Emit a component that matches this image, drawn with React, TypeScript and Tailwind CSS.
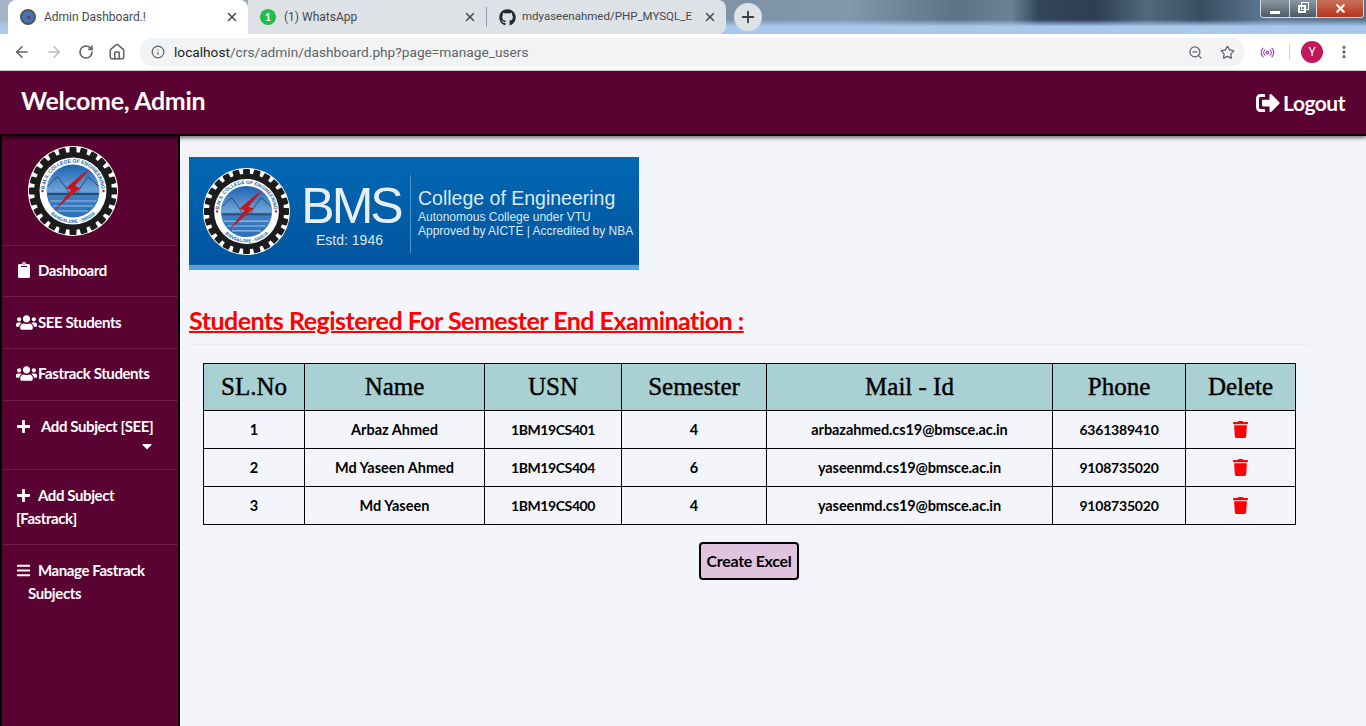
import { ArrowLeft, ArrowRight, Home, Info, MoreVertical, Plus, Radio, RotateCw, Star, X, ZoomOut } from "lucide-react";
import type { ReactNode } from "react";
import { FaBars, FaCaretDown, FaClipboard, FaGithub, FaPlus, FaSignOutAlt, FaTrash, FaUsers } from "react-icons/fa";

const students = [
    { sl: 1, name: "Arbaz Ahmed", usn: "1BM19CS401", sem: 4, mail: "arbazahmed.cs19@bmsce.ac.in", phone: "6361389410" },
    { sl: 2, name: "Md Yaseen Ahmed", usn: "1BM19CS404", sem: 6, mail: "yaseenmd.cs19@bmsce.ac.in", phone: "9108735020" },
    { sl: 3, name: "Md Yaseen", usn: "1BM19CS400", sem: 4, mail: "yaseenmd.cs19@bmsce.ac.in", phone: "9108735020" },
];

const headers = ["SL.No", "Name", "USN", "Semester", "Mail - Id", "Phone", "Delete"];

function CollegeLogo({ size }: { size: number }) {
    const teeth = Array.from({ length: 24 }, (_, i) => i * 15);
    return (
        <svg width={size} height={size} viewBox="0 0 90 90">
            <defs>
                <path id="logo-top-arc" d="M16.5 45a28.5 28.5 0 0 1 57 0" />
                <path id="logo-bottom-arc" d="M13 45a32 32 0 0 0 64 0" />
                <linearGradient id="logo-sky" x1="0" y1="0" x2="0" y2="1">
                    <stop offset="0" stopColor="#1b62b4" />
                    <stop offset="0.5" stopColor="#6fa4d8" />
                    <stop offset="0.55" stopColor="#3f7fc4" />
                    <stop offset="1" stopColor="#2d6fb8" />
                </linearGradient>
            </defs>
            <circle cx="45" cy="45" r="45" fill="#fff" />
            {teeth.map(a => (
                <rect key={a} x="41.5" y="1" width="7" height="9" rx="1" fill="#1c1c1c" transform={`rotate(${a} 45 45)`} />
            ))}
            <circle cx="45" cy="45" r="39" fill="#1c1c1c" />
            <circle cx="45" cy="45" r="33.5" fill="#fff" />
            <circle cx="45" cy="45" r="26.5" fill="url(#logo-sky)" />
            <path d="M19.5 47h51v2h-51z" fill="#274a70" />
            <path d="M20 40q7-8 10-9 5 6 11 16M49 47q6-10 11-16 4 2 10 9" fill="none" stroke="#1f4468" strokeWidth="0.9" />
            <path d="M22 55h46M25 60h40M30 65h30" stroke="#9cc2e6" strokeWidth="1.2" />
            <path d="M62 23 47 40l5 2-25 22 16-20-5-2 15-13z" fill="#c4161c" />
            <circle cx="14.5" cy="45" r="1.2" fill="#c4161c" />
            <circle cx="75.5" cy="45" r="1.2" fill="#c4161c" />
            <text fontSize="5" fontWeight="700" fill="#1f5fa8" fontFamily="Liberation Sans, sans-serif">
                <textPath href="#logo-top-arc" startOffset="50%" textAnchor="middle">B.M.S. COLLEGE OF ENGINEERING</textPath>
            </text>
            <text fontSize="4.6" fontWeight="700" fill="#1f5fa8" fontFamily="Liberation Sans, sans-serif">
                <textPath href="#logo-bottom-arc" startOffset="50%" textAnchor="middle">BANGALORE - 560019</textPath>
            </text>
        </svg>
    );
}

function Tab({ active, icon, title, width, className, titleClass }: { active?: boolean; icon: ReactNode; title: string; width: string; className?: string; titleClass?: string }) {
    return (
        <div className={`${width} h-[34px] shrink-0 flex items-center pl-3 pr-[9px] gap-2 ${active ? "bg-white rounded-t-lg" : "bg-[#dee1e6]"} ${className ?? ""}`}>
            {icon}
            <span className={`flex-1 min-w-0 whitespace-nowrap text-[#45494d] font-['Roboto',sans-serif] ${titleClass ?? "text-[12px]"}`}>{title}</span>
            <X size={14} strokeWidth={2.5} className="text-[#45494d] shrink-0" />
        </div>
    );
}

function SideItem({ icon, children, className }: { icon: ReactNode; children: ReactNode; className?: string }) {
    return (
        <div className={`border-t border-[#6d1c48] pl-[14px] pr-2 text-[15px] tracking-[-0.4px] font-bold leading-[23px] text-white ${className ?? ""}`}>
            <span className="inline-flex w-[22px] align-[-2px]">{icon}</span>
            {children}
        </div>
    );
}

function App() {
    return (
        <div className="h-[726px] flex flex-col overflow-hidden bg-[#f4f5fa] font-['Lato',sans-serif]">
            {/* browser tab strip */}
            <div className="relative h-[34px] shrink-0 flex bg-[linear-gradient(180deg,transparent_58%,#a9c9ec_78%),linear-gradient(90deg,#a5b5c4_0%,#7f93a6_55%,#8398ab_62%,#5d7287_70%,#6d8297_74%,#33475a_76%,#2c3e50_80%,#52687d_84%,#3a4e62_88%,#5f7b96_93%,#567390_100%)]">
                <div className="w-2 shrink-0"></div>
                <Tab
                    active
                    width="w-[240px]"
                    title="Admin Dashboard.!"
                    icon={
                        <span className="w-4 h-4 rounded-full bg-[#3b76bd] border-2 border-[#555] shrink-0 flex items-center justify-center">
                            <span className="w-[3px] h-[3px] bg-[#c4161c] rounded-full"></span>
                        </span>
                    }
                />
                <Tab
                    width="w-[238px]"
                    title="(1) WhatsApp"
                    icon={<span className="w-4 h-4 rounded-full bg-[#1ebe4e] text-white text-[11px] font-bold leading-4 text-center shrink-0">1</span>}
                />
                <div className="w-px h-[34px] shrink-0 bg-[#dee1e6] flex items-center"><div className="w-px h-5 bg-[#9aa0a6]"></div></div>
                <Tab
                    width="w-[239px]"
                    className="rounded-tr-lg rounded-br-lg"
                    titleClass="text-[11.5px]"
                    title="mdyaseenahmed/PHP_MYSQL_E"
                    icon={<FaGithub size={17} className="text-[#24292e] shrink-0 -mr-0.5" />}
                />
                <div className="ml-2 mt-[3px] w-7 h-7 shrink-0 rounded-full bg-[#dee1e6] flex items-center justify-center">
                    <Plus size={18} strokeWidth={2.5} className="text-[#3c4043]" />
                </div>
                {/* window buttons */}
                <div className="absolute right-[2px] top-0 h-[18px] flex border border-t-0 border-[#d5dbe2] rounded-b-[4px] overflow-hidden">
                    <div className="w-7 flex items-end justify-center pb-[3px] bg-[linear-gradient(180deg,#8a97a3,#4c5a68)]"><div className="w-[10px] h-[3px] bg-white"></div></div>
                    <div className="w-7 relative flex items-center justify-center border-x border-[#d5dbe2] bg-[linear-gradient(180deg,#8a97a3,#4c5a68)]">
                        <div className="absolute left-[11px] top-[2px] w-[8px] h-[8px] border border-white"></div>
                        <div className="absolute left-[8px] top-[5px] w-[8px] h-[8px] border-2 border-white"></div>
                    </div>
                    <div className="w-[46px] flex items-center justify-center bg-[linear-gradient(180deg,#c9705a,#b8341c)]"><X size={13} strokeWidth={4} className="text-white" /></div>
                </div>
            </div>

            {/* browser toolbar */}
            <div className="h-[37px] shrink-0 flex items-center bg-white border-b border-[#d3d5d8] pl-[13px] font-['Roboto',sans-serif]">
                <ArrowLeft size={18} className="text-[#5f6368]" />
                <ArrowRight size={18} className="text-[#babcbe] ml-[14px]" />
                <RotateCw size={16} strokeWidth={2.4} className="text-[#5f6368] ml-[15px]" />
                <Home size={18} className="text-[#5f6368] ml-[14px]" />
                <div className="ml-[14px] w-[1105px] h-7 rounded-full bg-[#f1f3f4] flex items-center pl-[11px] pr-[9px]">
                    <Info size={14} className="text-[#5f6368]" />
                    <span className="ml-[9px] flex-1 text-[13.7px] text-[#5f6368]"><span className="text-[#202124]">localhost</span>/crs/admin/dashboard.php?page=manage_users</span>
                    <ZoomOut size={15} className="text-[#5f6368]" />
                    <Star size={15} className="text-[#5f6368] ml-[17px] mr-[1px]" />
                </div>
                <Radio size={15} className="ml-[15px] text-[#a545c9]" />
                <div className="ml-[14px] w-px h-4 bg-[#d0d2d5]"></div>
                <div className="ml-[11px] w-[22px] h-[22px] rounded-full bg-[#c2185b] text-white text-[12px] flex items-center justify-center">Y</div>
                <MoreVertical size={16} strokeWidth={3} className="text-[#5f6368] ml-[13px]" />
            </div>

            {/* app header */}
            <header className="relative z-10 h-[65px] shrink-0 flex items-center justify-between px-[21px] bg-[#5a0231] border-b-2 border-black shadow-[0_2px_4px_rgba(0,0,0,0.55)] text-white font-bold">
                <p className="text-[25px] tracking-[-0.3px] mt-[-4px]">Welcome, Admin</p>
                <p className="flex items-center gap-[3px] text-[21px] tracking-[-0.5px]"><FaSignOutAlt size={24} />Logout</p>
            </header>

            <div className="flex-1 flex min-h-0">
                {/* sidebar */}
                <aside className="w-[180px] shrink-0 bg-[#5a0231] border-x-2 border-black">
                    <div className="h-[109px] pl-[26px] pt-[10px]"><CollegeLogo size={90} /></div>
                    <SideItem className="h-[51px] pt-[13px]" icon={<FaClipboard size={16} />}>Dashboard</SideItem>
                    <SideItem className="h-[52px] pt-[12px]" icon={<FaUsers size={21} className="translate-y-[3px]" />}>SEE Students</SideItem>
                    <SideItem className="h-[52px] pt-[11px]" icon={<FaUsers size={21} className="translate-y-[3px]" />}>Fastrack Students</SideItem>
                    <div className="h-[69px] border-t border-[#6d1c48] pl-[14px] pr-2 pt-[14px] text-[15px] tracking-[-0.4px] font-bold leading-[23px] text-white">
                        <span className="inline-flex w-[25px] align-[-2px]"><FaPlus size={15} /></span>Add Subject [SEE]
                        <div className="flex justify-end pr-[15px]"><FaCaretDown size={16} /></div>
                    </div>
                    <SideItem className="h-[75px] pt-[14px]" icon={<FaPlus size={15} />}>Add Subject [Fastrack]</SideItem>
                    <div className="h-[70px] border-t border-[#6d1c48] pl-[14px] pt-[14px] text-[15px] tracking-[-0.4px] font-bold leading-[23px] text-white">
                        <span className="inline-flex w-[22px] align-[-2px]"><FaBars size={15} /></span>Manage Fastrack
                        <p className="pl-3">Subjects</p>
                    </div>
                </aside>

                {/* main content */}
                <main className="flex-1 min-w-0 pl-[9px] pt-[21px]">
                    <div className="w-[450px] h-[113px] flex bg-[linear-gradient(180deg,#0268b3_0%,#01559f_95%,#5a9fd4_96%)] text-[#dce8f2] font-['Liberation_Sans',sans-serif]">
                        <div className="ml-[14px] mt-[11px] shrink-0"><CollegeLogo size={87} /></div>
                        <div className="ml-[12px] w-[98px] mt-[24px] flex flex-col items-center shrink-0">
                            <p className="text-[50px] leading-[50px] tracking-[-3px] text-[#e8eef3]">BMS</p>
                            <p className="text-[14px] leading-[16px] mt-[1px] pr-[3px]">Estd: 1946</p>
                        </div>
                        <div className="ml-[10px] mt-[18px] w-px h-[78px] bg-[#4d95cc]"></div>
                        <div className="ml-[7px] mt-[30px] shrink-0">
                            <p className="text-[19.5px] leading-[22px]">College of Engineering</p>
                            <p className="text-[12px] leading-[14px] mt-[1px]">Autonomous College under VTU</p>
                            <p className="text-[12px] leading-[14px]">Approved by AICTE | Accredited by NBA</p>
                        </div>
                    </div>

                    <h2 className="mt-[35px] text-[25px] tracking-[-0.5px] leading-[30px] font-bold text-[#ff0000] underline decoration-2">Students Registered For Semester End Examination :</h2>
                    <div className="mt-[9px] w-[1121px] h-px bg-[#ebecef]"></div>

                    <table className="mt-[18px] ml-[14px] w-[1092px] table-fixed border-collapse border border-black">
                        <colgroup>
                            <col className="w-[101px]" />
                            <col className="w-[180px]" />
                            <col className="w-[137px]" />
                            <col className="w-[145px]" />
                            <col className="w-[286px]" />
                            <col className="w-[133px]" />
                            <col className="w-[110px]" />
                        </colgroup>
                        <thead>
                            <tr className="h-[47px] bg-[#a9d0d2]">
                                {headers.map(h => (
                                    <th key={h} className="border border-black text-[25px] font-normal text-black font-['Liberation_Serif',serif] [-webkit-text-stroke:0.4px_black]">{h}</th>
                                ))}
                            </tr>
                        </thead>
                        <tbody>
                            {students.map(s => (
                                <tr key={s.sl} className="h-[38px] text-[14.5px] font-bold text-black text-center">
                                    <td className="border border-black">{s.sl}</td>
                                    <td className="border border-black">{s.name}</td>
                                    <td className="border border-black text-[14px] tracking-[-0.4px]">{s.usn}</td>
                                    <td className="border border-black">{s.sem}</td>
                                    <td className="border border-black tracking-[-0.1px]">{s.mail}</td>
                                    <td className="border border-black text-[14px] tracking-[-0.2px]">{s.phone}</td>
                                    <td className="border border-black"><FaTrash size={17} className="block mx-auto text-[#ff0000]" /></td>
                                </tr>
                            ))}
                        </tbody>
                    </table>

                    <div className="mt-[17px] ml-[14px] w-[1092px] flex justify-center">
                        <button className="w-[100px] h-[38px] border-2 border-black rounded-[4px] bg-[#dfc3df] text-[16px] tracking-[-0.3px] whitespace-nowrap font-bold text-black">Create Excel</button>
                    </div>
                </main>
            </div>
        </div>
    );
}

export default App
